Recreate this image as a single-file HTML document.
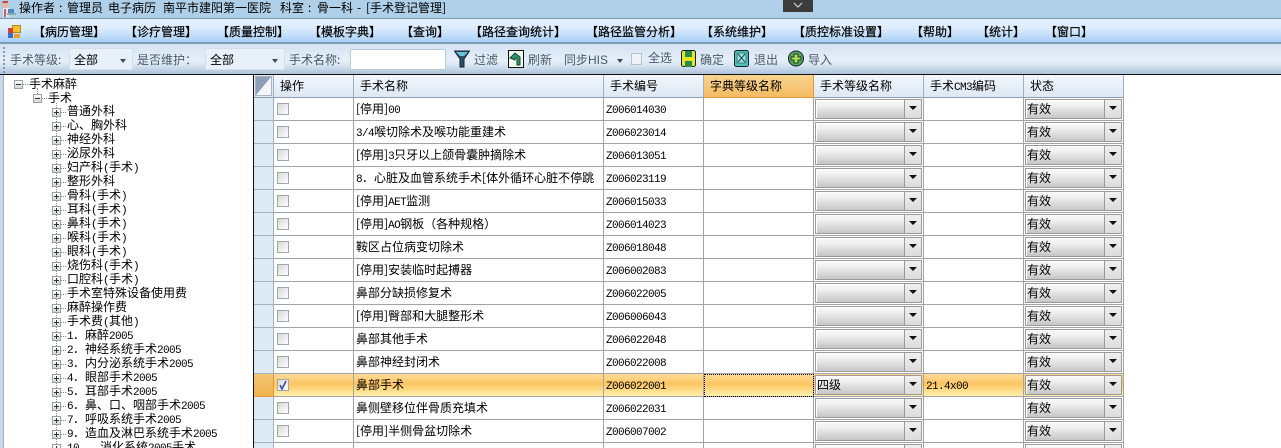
<!DOCTYPE html>
<html><head><meta charset="utf-8"><style>
*{box-sizing:border-box}
html,body{margin:0;padding:0;width:1281px;height:448px;overflow:hidden}
#page{width:1281px;height:448px;overflow:hidden;position:relative;background:#c9d9ea;font:12px/14px "WenQuanYi Zen Hei","Noto Sans CJK SC","Liberation Sans",sans-serif;color:#000}
i{font:11px/1 "Liberation Mono",monospace;font-style:normal;letter-spacing:-.6px}
.a{position:absolute;white-space:nowrap}
#title{left:0;top:0;width:1281px;height:18px;background:#b0cfe8}
#chev{left:783px;top:0;width:30px;height:12px;background:#3c3c3c}
#menu{left:0;top:18px;width:1281px;height:26px;background:linear-gradient(#e6f1fd,#dcecfd 40%,#a9d0f6);border-top:1px solid #7d97ad;border-bottom:2px solid #7e99b0}
#tb{left:0;top:44px;width:1281px;height:31px;background:linear-gradient(#d3e2f1,#e6eff8 55%,#d8e5f2 70%,#aec3d9);border-bottom:1px solid #111}
.m{top:25px;-webkit-text-stroke:.2px #000}
.t{top:53px;color:#47596b}
.cb{background:#e8f1fa;border:1px solid #d3dfeb;height:22px;top:48px}
.cb:after{content:"";position:absolute;right:6px;top:10px;border:3px solid transparent;border-top:4px solid #445;border-bottom:0}
#tree{left:3px;top:75px;width:250px;height:373px;background:#fff;border-left:1px solid #9db2c6}
.n{left:67px}
.p{position:absolute;left:52px;width:9px;height:9px;border:1px solid #98a0a8;background:linear-gradient(#fff,#d6d6d6)}
.p:before{content:"";position:absolute;left:1px;top:3px;width:5px;height:1px;background:#333}
.p.c:after{content:"";position:absolute;left:3px;top:1px;width:1px;height:5px;background:#333}
.d{position:absolute;border-left:1px dotted #888}
.e{position:absolute;border-top:1px dotted #888;height:0;width:5px}
#grid{left:253px;top:74px;width:1028px;height:374px;background:#fff;border-top:1px solid #111;border-left:1px solid #111;overflow:hidden}
table{border-collapse:separate;border-spacing:0;table-layout:fixed;width:870px}
td,th{padding:0;height:23px;border-right:1px solid #a3a3a3;border-bottom:1px solid #a3a3a3;font-weight:normal;text-align:left;white-space:nowrap;overflow:hidden;position:relative}
th{background:linear-gradient(#f2f7fc,#dde8f4);border-right:1px solid #9fb0c5;border-bottom:1px solid #8c9db5;padding-left:6px}
th.o{background:linear-gradient(#f8d48f,#f4bb62);border-bottom-color:#e8953a;border-right-color:#e8953a}
td.rh{background:#deebf7;border-right-color:#9fb0c5;border-bottom-color:#a3b3c5}
td.x{padding-left:2px}
td.y{padding-left:2px}
.k{position:absolute;left:3px;top:5px;width:12px;height:12px;border:1px solid #a5a5a5;background:linear-gradient(135deg,#d8d8d8,#fff)}
.s{position:absolute;left:1px;right:1px;top:1px;height:20px;background:linear-gradient(#f9f9f9,#f0f0f0 30%,#c6c6c6);border:1px solid #9a9a9a;box-shadow:inset 1px 1px 0 #fff;padding:2px 0 0 1px;line-height:14px}
.s:before{content:"";position:absolute;right:0;top:0;width:16px;height:18px;background:linear-gradient(#f0f0f0,#dcdcdc);border-left:1px solid #999;border-bottom:1px solid #999}
.s:after{content:"";position:absolute;right:4px;top:6px;border:4px solid transparent;border-top:4px solid #111;border-bottom:0}
tr.h td{background:linear-gradient(#ffdc9c,#fdc561 45%,#fff1ae);border-bottom-color:#a3a3a3}
tr.h td.rh{background:linear-gradient(#f4c874,#efb24c);border-right-color:#e8953a;border-bottom-color:#e8953a;border-top:0}
.f{outline:1px dotted #000;outline-offset:-1px}
</style></head><body><div id="page">
<div class="a" id="title"></div>
<svg class="a" style="left:0;top:0" width="16" height="17" viewBox="0 0 16 17"><rect x="3" y="8" width="6" height="9" fill="#e8e8ea"/><circle cx="5" cy="5" r="3" fill="#e9b79a"/><path d="M2 3h6V1H3z" fill="#c9453f"/><path d="M5 9v8" stroke="#b33" stroke-width="1.5"/><rect x="8" y="9" width="6" height="4" fill="#4f86c0"/><rect x="7" y="13" width="9" height="2" fill="#8aa"/></svg>
<div class="a" style="left:19px;top:1px">操作者</div><div class="a" style="left:59px;top:1px">:</div><div class="a" style="left:67px;top:1px">管理员</div>
<div class="a" style="left:108px;top:1px">电子病历</div>
<div class="a" style="left:163px;top:1px">南平市建阳第一医院</div>
<div class="a" style="left:280px;top:1px">科室</div><div class="a" style="left:308px;top:1px">:</div><div class="a" style="left:317px;top:1px">骨一科</div>
<div class="a" style="left:357px;top:1px">-</div>
<div class="a" style="left:366px;top:1px">[手术登记管理]</div>
<div class="a" id="chev"><svg width="30" height="12" style="display:block"><path d="M11 3l4 4 4-4" fill="none" stroke="#ddd"/></svg></div>
<div class="a" id="menu"></div>
<svg class="a" style="left:8px;top:25px" width="13" height="13"><rect x="4.5" y=".5" width="8" height="7" fill="#f2c230" stroke="#b58a1a"/><rect x="0" y="3" width="5" height="5" fill="#d8402e"/><rect x="0" y="8" width="5" height="5" fill="#3f6fc0"/><rect x="6" y="9" width="6" height="4" fill="#e8a030"/></svg>
<div class="a m" style="left:33px">【病历管理】</div>
<div class="a m" style="left:125px">【诊疗管理】</div>
<div class="a m" style="left:217px">【质量控制】</div>
<div class="a m" style="left:309px">【模板字典】</div>
<div class="a m" style="left:401px">【查询】</div>
<div class="a m" style="left:470px">【路径查询统计】</div>
<div class="a m" style="left:586px">【路径监管分析】</div>
<div class="a m" style="left:701px">【系统维护】</div>
<div class="a m" style="left:793px">【质控标准设置】</div>
<div class="a m" style="left:911px">【帮助】</div>
<div class="a m" style="left:977px">【统计】</div>
<div class="a m" style="left:1045px">【窗口】</div>
<div class="a" id="tb"></div>
<div class="a" style="left:3px;top:47px;height:26px;border-left:2px dotted #8a9db0"></div>
<div class="a t" style="left:10px">手术等级:</div>
<div class="a cb" style="left:69px;width:64px"></div><div class="a" style="left:74px;top:53px">全部</div>
<div class="a t" style="left:137px">是否维护：</div>
<div class="a cb" style="left:205px;width:80px"></div><div class="a" style="left:210px;top:53px">全部</div>
<div class="a t" style="left:289px">手术名称:</div>
<div class="a" style="left:350px;top:49px;width:96px;height:21px;background:#fff;border:1px solid #bccbd9"></div>
<svg class="a" style="left:454px;top:50px" width="16" height="18"><path d="M.5 1h15L10 9v8H6V9z" fill="#2f4f66" stroke="#123"/><path d="M2 2h12l-4 4H6z" fill="#6cc0dc"/></svg>
<div class="a t" style="left:474px">过滤</div>
<svg class="a" style="left:508px;top:50px" width="16" height="18"><rect x=".5" y=".5" width="15" height="17" fill="#f4f6ee" stroke="#111"/><path d="M2 8l5-5 5 4v8H9V8H7v2z" fill="#2e9a68" stroke="#143"/></svg>
<div class="a t" style="left:528px">刷新</div>
<div class="a t" style="left:564px">同步<span style="font:12px/14px 'Liberation Sans',sans-serif">HIS</span></div>
<div class="a" style="left:617px;top:59px;border:3px solid transparent;border-top:4px solid #445;border-bottom:0"></div>
<div class="a" style="left:631px;top:53px;width:11px;height:12px;background:#eef3f8;border:1px solid #b4c0cc"></div>
<div class="a t" style="left:648px;top:51px">全选</div>
<svg class="a" style="left:681px;top:50px" width="15" height="17"><rect x=".5" y=".5" width="14" height="16" rx="2" fill="#e8e820" stroke="#123"/><rect x="4" y="1" width="7" height="6" fill="#2a8a50"/><rect x="4" y="11" width="7" height="6" fill="#2a8a50"/></svg>
<div class="a t" style="left:700px">确定</div>
<svg class="a" style="left:734px;top:50px" width="15" height="17"><rect x=".5" y=".5" width="14" height="16" rx="2" fill="#4cc4b4" stroke="#123"/><rect x="3" y="3" width="9" height="10" fill="#a5e0e0" stroke="#3a7a80"/><path d="M4 4l7 8M11 4l-7 8" stroke="#16504f"/></svg>
<div class="a t" style="left:754px">退出</div>
<svg class="a" style="left:788px;top:50px" width="16" height="17"><circle cx="8" cy="8.5" r="7.5" fill="#5ea85e" stroke="#123"/><path d="M6 4h4v3h3v3h-3v3H6v-3H3V7h3z" fill="#b4e04c" stroke="#143"/></svg>
<div class="a t" style="left:808px">导入</div>

<div class="a" id="tree"></div>
<div class="d" style="left:37px;top:88px;height:12px"></div>
<div class="d" style="left:56px;top:103px;height:345px"></div>
<div class="p" style="left:14px;top:80px"></div><div class="e" style="left:23px;top:84px"></div><div class="a" style="left:29px;top:77px">手术麻醉</div>
<div class="p" style="left:33px;top:94px"></div><div class="e" style="left:42px;top:98px"></div><div class="a" style="left:48px;top:91px">手术</div>
<div class="p c" style="top:108px"></div><div class="e" style="left:61px;top:112px"></div><div class="a n" style="top:104px">普通外科</div>
<div class="p c" style="top:122px"></div><div class="e" style="left:61px;top:126px"></div><div class="a n" style="top:118px">心、胸外科</div>
<div class="p c" style="top:136px"></div><div class="e" style="left:61px;top:140px"></div><div class="a n" style="top:132px">神经外科</div>
<div class="p c" style="top:150px"></div><div class="e" style="left:61px;top:154px"></div><div class="a n" style="top:146px">泌尿外科</div>
<div class="p c" style="top:164px"></div><div class="e" style="left:61px;top:168px"></div><div class="a n" style="top:160px">妇产科<i>(</i>手术<i>)</i></div>
<div class="p c" style="top:178px"></div><div class="e" style="left:61px;top:182px"></div><div class="a n" style="top:174px">整形外科</div>
<div class="p c" style="top:192px"></div><div class="e" style="left:61px;top:196px"></div><div class="a n" style="top:188px">骨科<i>(</i>手术<i>)</i></div>
<div class="p c" style="top:206px"></div><div class="e" style="left:61px;top:210px"></div><div class="a n" style="top:202px">耳科<i>(</i>手术<i>)</i></div>
<div class="p c" style="top:220px"></div><div class="e" style="left:61px;top:224px"></div><div class="a n" style="top:216px">鼻科<i>(</i>手术<i>)</i></div>
<div class="p c" style="top:234px"></div><div class="e" style="left:61px;top:238px"></div><div class="a n" style="top:230px">喉科<i>(</i>手术<i>)</i></div>
<div class="p c" style="top:248px"></div><div class="e" style="left:61px;top:252px"></div><div class="a n" style="top:244px">眼科<i>(</i>手术<i>)</i></div>
<div class="p c" style="top:262px"></div><div class="e" style="left:61px;top:266px"></div><div class="a n" style="top:258px">烧伤科<i>(</i>手术<i>)</i></div>
<div class="p c" style="top:276px"></div><div class="e" style="left:61px;top:280px"></div><div class="a n" style="top:272px">口腔科<i>(</i>手术<i>)</i></div>
<div class="p c" style="top:290px"></div><div class="e" style="left:61px;top:294px"></div><div class="a n" style="top:286px">手术室特殊设备使用费</div>
<div class="p c" style="top:304px"></div><div class="e" style="left:61px;top:308px"></div><div class="a n" style="top:300px">麻醉操作费</div>
<div class="p c" style="top:318px"></div><div class="e" style="left:61px;top:322px"></div><div class="a n" style="top:314px">手术费<i>(</i>其他<i>)</i></div>
<div class="p c" style="top:332px"></div><div class="e" style="left:61px;top:336px"></div><div class="a n" style="top:328px"><i>1</i>．麻醉<i>2005</i></div>
<div class="p c" style="top:346px"></div><div class="e" style="left:61px;top:350px"></div><div class="a n" style="top:342px"><i>2</i>．神经系统手术<i>2005</i></div>
<div class="p c" style="top:360px"></div><div class="e" style="left:61px;top:364px"></div><div class="a n" style="top:356px"><i>3</i>．内分泌系统手术<i>2005</i></div>
<div class="p c" style="top:374px"></div><div class="e" style="left:61px;top:378px"></div><div class="a n" style="top:370px"><i>4</i>．眼部手术<i>2005</i></div>
<div class="p c" style="top:388px"></div><div class="e" style="left:61px;top:392px"></div><div class="a n" style="top:384px"><i>5</i>．耳部手术<i>2005</i></div>
<div class="p c" style="top:402px"></div><div class="e" style="left:61px;top:406px"></div><div class="a n" style="top:398px"><i>6</i>．鼻、口、咽部手术<i>2005</i></div>
<div class="p c" style="top:416px"></div><div class="e" style="left:61px;top:420px"></div><div class="a n" style="top:412px"><i>7</i>．呼吸系统手术<i>2005</i></div>
<div class="p c" style="top:430px"></div><div class="e" style="left:61px;top:434px"></div><div class="a n" style="top:426px"><i>9</i>．造血及淋巴系统手术<i>2005</i></div>
<div class="p c" style="top:444px"></div><div class="a n" style="top:440px"><i>10</i>．<span style="margin-left:9px">消化系统</span><i>2005</i>手术</div>

<div class="a" id="grid">
<table>
<colgroup><col style="width:20px"><col style="width:80px"><col style="width:250px"><col style="width:100px"><col style="width:110px"><col style="width:110px"><col style="width:100px"><col style="width:100px"></colgroup>
<tr><th style="padding:0;background:#dfe9f4"><svg width="19" height="22" style="display:block"><rect x="1.5" y="1.5" width="16" height="19" fill="#f4f6fa" stroke="#a8b4c2"/><path d="M2 2h15L2 20z" fill="#8d9fb6"/></svg></th><th>操作</th><th>手术名称</th><th>手术编号</th><th class="o">字典等级名称</th><th>手术等级名称</th><th>手术<i>CM3</i>编码</th><th>状态</th></tr>
<tr><td class="rh"></td><td><div class="k"></div></td><td class="y">[停用]<i>00</i></td><td class="x"><i>Z006014030</i></td><td></td><td><div class="s"></div></td><td></td><td><div class="s">有效</div></td></tr>
<tr><td class="rh"></td><td><div class="k"></div></td><td class="y"><i>3/4</i>喉切除术及喉功能重建术</td><td class="x"><i>Z006023014</i></td><td></td><td><div class="s"></div></td><td></td><td><div class="s">有效</div></td></tr>
<tr><td class="rh"></td><td><div class="k"></div></td><td class="y">[停用]<i>3</i>只牙以上颌骨囊肿摘除术</td><td class="x"><i>Z006013051</i></td><td></td><td><div class="s"></div></td><td></td><td><div class="s">有效</div></td></tr>
<tr><td class="rh"></td><td><div class="k"></div></td><td class="y"><i>8</i>．心脏及血管系统手术[体外循环心脏不停跳</td><td class="x"><i>Z006023119</i></td><td></td><td><div class="s"></div></td><td></td><td><div class="s">有效</div></td></tr>
<tr><td class="rh"></td><td><div class="k"></div></td><td class="y">[停用]<i>AET</i>监测</td><td class="x"><i>Z006015033</i></td><td></td><td><div class="s"></div></td><td></td><td><div class="s">有效</div></td></tr>
<tr><td class="rh"></td><td><div class="k"></div></td><td class="y">[停用]<i>AO</i>钢板（各种规格）</td><td class="x"><i>Z006014023</i></td><td></td><td><div class="s"></div></td><td></td><td><div class="s">有效</div></td></tr>
<tr><td class="rh"></td><td><div class="k"></div></td><td class="y">鞍区占位病变切除术</td><td class="x"><i>Z006018048</i></td><td></td><td><div class="s"></div></td><td></td><td><div class="s">有效</div></td></tr>
<tr><td class="rh"></td><td><div class="k"></div></td><td class="y">[停用]安装临时起搏器</td><td class="x"><i>Z006002083</i></td><td></td><td><div class="s"></div></td><td></td><td><div class="s">有效</div></td></tr>
<tr><td class="rh"></td><td><div class="k"></div></td><td class="y">鼻部分缺损修复术</td><td class="x"><i>Z006022005</i></td><td></td><td><div class="s"></div></td><td></td><td><div class="s">有效</div></td></tr>
<tr><td class="rh"></td><td><div class="k"></div></td><td class="y">[停用]臀部和大腿整形术</td><td class="x"><i>Z006006043</i></td><td></td><td><div class="s"></div></td><td></td><td><div class="s">有效</div></td></tr>
<tr><td class="rh"></td><td><div class="k"></div></td><td class="y">鼻部其他手术</td><td class="x"><i>Z006022048</i></td><td></td><td><div class="s"></div></td><td></td><td><div class="s">有效</div></td></tr>
<tr><td class="rh"></td><td><div class="k"></div></td><td class="y">鼻部神经封闭术</td><td class="x"><i>Z006022008</i></td><td></td><td><div class="s"></div></td><td></td><td><div class="s">有效</div></td></tr>
<tr class="h"><td class="rh"></td><td><div class="k"><svg width="10" height="10" style="display:block"><path d="M2 5l2 4 4-8" fill="none" stroke="#3a4fa0" stroke-width="1.6"/></svg></div></td><td class="y">鼻部手术</td><td class="x"><i>Z006022001</i></td><td class="f"></td><td><div class="s">四级</div></td><td class="x"><i>21.4x00</i></td><td><div class="s">有效</div></td></tr>
<tr><td class="rh"></td><td><div class="k"></div></td><td class="y">鼻侧壁移位伴骨质充填术</td><td class="x"><i>Z006022031</i></td><td></td><td><div class="s"></div></td><td></td><td><div class="s">有效</div></td></tr>
<tr><td class="rh"></td><td><div class="k"></div></td><td class="y">[停用]半侧骨盆切除术</td><td class="x"><i>Z006007002</i></td><td></td><td><div class="s"></div></td><td></td><td><div class="s">有效</div></td></tr>
<tr><td class="rh"></td><td><div class="k"></div></td><td></td><td></td><td></td><td><div class="s"></div></td><td></td><td><div class="s"></div></td></tr>
</table>
</div>
</div></body></html>
